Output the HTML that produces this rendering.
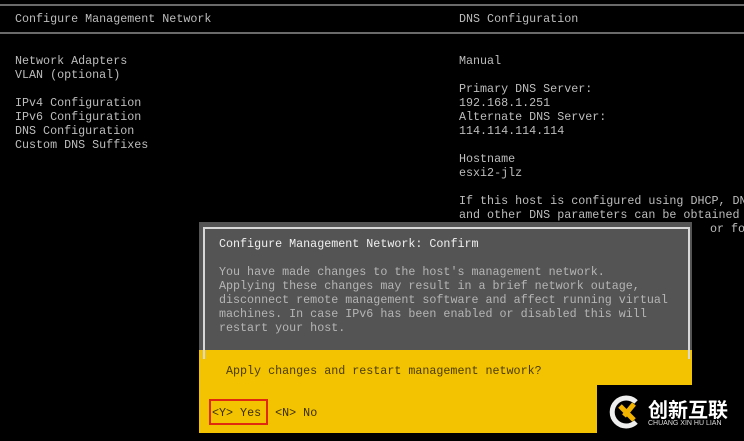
<!DOCTYPE html>
<html><head><style>
body{margin:0;width:744px;height:441px;background:#000;overflow:hidden;position:relative;font-family:"Liberation Mono",monospace;font-size:11.7px;line-height:14px;color:#bdbdbd}
.a{position:absolute;white-space:pre}
.hl{position:absolute;left:0;width:744px;height:2px;background:#6a6a6a}
</style></head><body>
<div class="hl" style="top:4px"></div>
<div class="hl" style="top:32px"></div>
<div class="a" style="left:15px;top:12px">Configure Management Network</div>
<div class="a" style="left:459px;top:12px">DNS Configuration</div>
<div class="a" style="left:15px;top:54px">Network Adapters
VLAN (optional)

IPv4 Configuration
IPv6 Configuration
DNS Configuration
Custom DNS Suffixes</div>
<div class="a" style="left:459px;top:54px">Manual

Primary DNS Server:
192.168.1.251
Alternate DNS Server:
114.114.114.114

Hostname
esxi2-jlz

If this host is configured using DHCP, DNS
and other DNS parameters can be obtained</div>
<div class="a" style="left:710px;top:222px">or for t</div>
<div style="position:absolute;left:199px;top:222px;width:493px;height:128px;background:#545454"></div>
<div style="position:absolute;left:199px;top:350px;width:493px;height:83px;background:#f3c200"></div>
<div style="position:absolute;left:203px;top:227px;width:483px;height:130px;border:2px solid #d8d8d8;border-bottom:none"></div>
<div class="a" style="left:219px;top:237px;color:#f0f0f0">Configure Management Network: Confirm</div>
<div class="a" style="left:219px;top:265px;color:#b5b5b5">You have made changes to the host's management network.
Applying these changes may result in a brief network outage,
disconnect remote management software and affect running virtual
machines. In case IPv6 has been enabled or disabled this will
restart your host.</div>
<div class="a" style="left:226px;top:364px;color:#4a3c00">Apply changes and restart management network?</div>
<div class="a" style="left:212px;top:406px;color:#3a2e00">&lt;Y&gt; Yes  &lt;N&gt; No</div>
<div style="position:absolute;left:209px;top:399px;width:55px;height:22px;border:2px solid #e02a10"></div>
<div style="position:absolute;left:597px;top:385px;width:147px;height:56px;background:#000"></div>
<svg style="position:absolute;left:608px;top:394px" width="36" height="36" viewBox="0 0 36 36"><path d="M28 8A14 14 0 1 0 28 28" fill="none" stroke="#eee" stroke-width="5"/><path d="M12 12L26 26M26 10L16 22" stroke="#f3b400" stroke-width="5"/></svg>
<div class="a" style="left:648px;top:397px;color:#fff;font-family:'Noto Sans CJK SC',sans-serif;font-size:20px;line-height:24px;font-weight:bold">创新互联</div>
<div class="a" style="left:648px;top:420px;color:#ddd;font-family:'Liberation Sans',sans-serif;font-size:7px;line-height:8px">CHUANG XIN HU LIAN</div>
</body></html>
